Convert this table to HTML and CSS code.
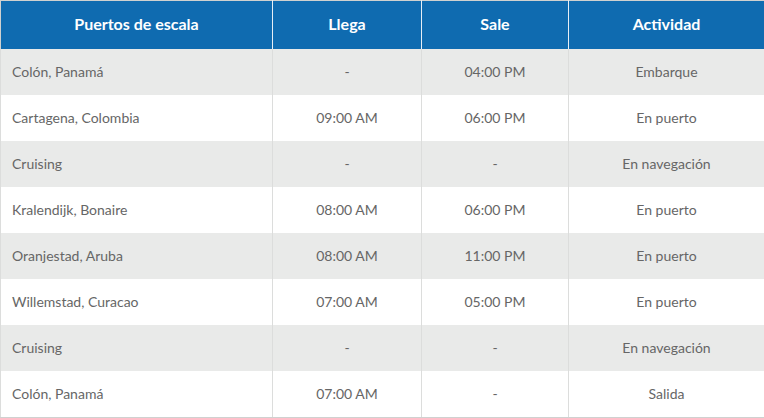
FILE: index.html
```
<!DOCTYPE html>
<html lang="es">
<head>
<meta charset="utf-8">
<link rel="stylesheet" href="styles.css">
</head>
<body>
<table class="itinerary">
  <colgroup>
    <col class="c-port"><col class="c-arr"><col class="c-dep"><col class="c-act">
  </colgroup>
  <thead>
    <tr>
      <th>Puertos de escala</th>
      <th>Llega</th>
      <th>Sale</th>
      <th>Actividad</th>
    </tr>
  </thead>
  <tbody>
    <tr><td class="port">Colón, Panamá</td><td>-</td><td>04:00 PM</td><td>Embarque</td></tr>
    <tr><td class="port">Cartagena, Colombia</td><td>09:00 AM</td><td>06:00 PM</td><td>En puerto</td></tr>
    <tr><td class="port">Cruising</td><td>-</td><td>-</td><td>En navegación</td></tr>
    <tr><td class="port">Kralendijk, Bonaire</td><td>08:00 AM</td><td>06:00 PM</td><td>En puerto</td></tr>
    <tr><td class="port">Oranjestad, Aruba</td><td>08:00 AM</td><td>11:00 PM</td><td>En puerto</td></tr>
    <tr><td class="port">Willemstad, Curacao</td><td>07:00 AM</td><td>05:00 PM</td><td>En puerto</td></tr>
    <tr><td class="port">Cruising</td><td>-</td><td>-</td><td>En navegación</td></tr>
    <tr><td class="port">Colón, Panamá</td><td>07:00 AM</td><td>-</td><td>Salida</td></tr>
  </tbody>
</table>
</body>
</html>
```
FILE: styles.css
```
html, body {
  margin: 0;
  padding: 0;
  background: #ffffff;
}

.itinerary {
  width: 764px;
  border-collapse: collapse;
  table-layout: fixed;
  font-family: Lato, "Open Sans", sans-serif;
  border: 1px solid #cfd1d0;
}

.c-port { width: 272px; }
.c-arr { width: 149px; }
.c-dep { width: 147px; }
.c-act { width: 196px; }

.itinerary th {
  height: 45px;
  padding: 0 0 3px;
  background: #0f6bb0;
  color: #ffffff;
  font-weight: 700;
  font-size: 16px;
  text-align: center;
  border-left: 1px solid #e6eef6;
  border-right: 1px solid #e6eef6;
  border-top: 1px solid #cfd1d0;
}

.itinerary th:first-child { border-left: 1px solid #cfd1d0; }
.itinerary th:last-child { border-right: 1px solid #cfd1d0; }

.itinerary td {
  height: 44px;
  padding: 0 0 2px;
  font-size: 14px;
  color: #666666;
  text-align: center;
  border-left: 1px solid #dcdddc;
  border-right: 1px solid #dcdddc;
}

.itinerary td.port {
  text-align: left;
  padding-left: 11px;
}

.itinerary tbody tr:nth-child(odd) td {
  background: #e9eae9;
}

.itinerary tbody tr:last-child td {
  border-bottom: 1px solid #cfd1d0;
}
```
